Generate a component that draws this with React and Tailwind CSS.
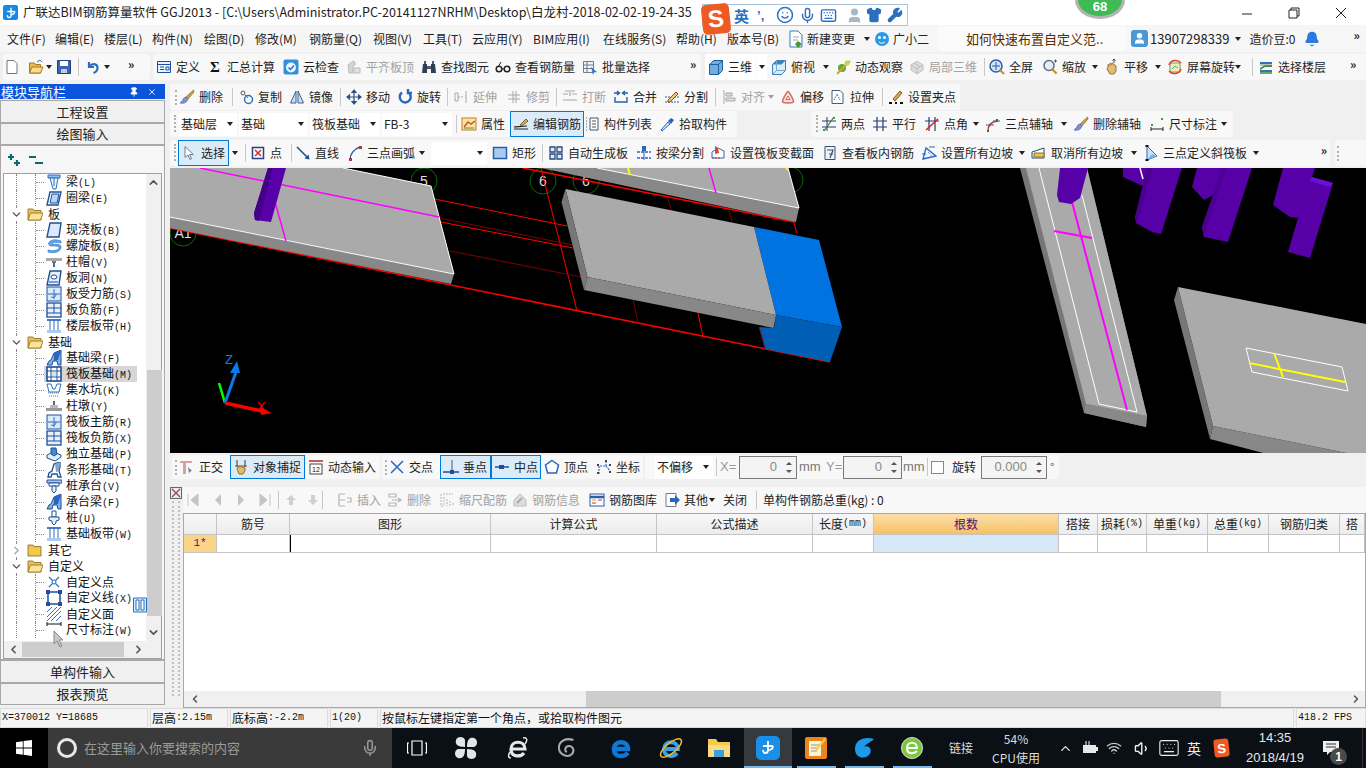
import React from 'react'
import { Mic, Smile, Keyboard, Shirt, Wrench, User, Bell, ChevronUp, ChevronDown, ChevronLeft, ChevronRight, Wifi, Volume1, Pin, X } from 'lucide-react'

const B = '#2a6fc0'
const D = '#1d4f9c'
const G = '#a8a8a8'

const icons = {
  new: <path d="M3 1.500h7l3 3v10H3z" fill="#fff" stroke="#777" />,
  open: <><path d="M1.500 4h5l1 1.500h5V14h-11z" fill="#e9b84e" stroke="#a67a1c" /><path d="M4 8h11l-2.500 6h-11z" fill="#f8dc8c" stroke="#a67a1c" /><path d="M9 3l3-2 2 2" fill="none" stroke={B} /></>,
  save: <><path d="M1.500 1.500h13v13h-13z" fill="#3e62b8" stroke="#223d80" /><path d="M4 2h8v5H4z" fill="#fff" /><path d="M5 10h6v4H5z" fill="#c4cde0" /></>,
  undo: <path d="M4 3v5h5M4.500 7.500C7 4 12 4.500 12.500 8.500c.3 2.500-1.500 4.500-4 5.500" fill="none" stroke={B} strokeWidth="2.200" />,
  def: <><path d="M1.500 2.500h13v11h-13z" fill="#eaf2fb" stroke={D} /><path d="M1.500 5.500h13M4 8h4M4 10.500h4M10 8h3v3h-3z" fill="none" stroke={D} /></>,
  sigma: <text x="8" y="13" fontSize="15" fontWeight="700" textAnchor="middle" fill="#111" fontFamily="Liberation Serif">Σ</text>,
  cloud: <><rect x="0.500" y="0.500" width="15" height="15" rx="2" fill="#2f8fe0" /><circle cx="8" cy="8.500" r="5" fill="#e8f4ff" /><path d="M5.500 8.500l2 2 3.500-4" fill="none" stroke={B} strokeWidth="1.500" /></>,
  flush: <><path d="M2 6l5-4 2 1v3l-2 1v7H3z" fill="#d4d4d4" stroke="#bbb" /><path d="M8 9h6v5H8z" fill="#e2e2e2" stroke="#bbb" /></>,
  find: <><path d="M2 5h4v9H1zM10 5h4l1 9h-5z" fill="#2c3f55" /><path d="M3 2h2v3H3zM11 2h2v3h-2zM6 7h4v3H6z" fill="#557" /></>,
  view: <><circle cx="4" cy="10" r="2.800" fill="none" stroke="#222" strokeWidth="1.500" /><circle cx="12" cy="10" r="2.800" fill="none" stroke="#222" strokeWidth="1.500" /><path d="M3 8l3-5M7 10h2" stroke="#222" /></>,
  batch: <><path d="M1.500 2.500h10v11h-10zM1.500 6h10M1.500 9.500h10M5 2.500v11" fill="#f4f4f4" stroke="#6d7d90" /><path d="M9 8l6 5-3 .5-1 2.500z" fill="#3a78c4" /></>,
  cube: <><path d="M1.500 5.500l4-4h9v10l-4 4h-9z" fill="#6eaee0" stroke="#1f5f99" /><path d="M1.500 5.500h9l4-4M10.500 5.500v10" fill="none" stroke="#1f5f99" /></>,
  top: <><path d="M1.500 5.500l4-4h9v10l-4 4h-9z" fill="#d9ecf9" stroke="#3f7fb5" /><path d="M5.500 1.500h9l-4 4h-9z" fill="#3f85bc" /><path d="M5.500 1.500v10h9M5.500 11.500l-4 4" fill="none" stroke="#7aa8cc" /></>,
  orbit: <><circle cx="7" cy="9" r="4" fill="#5fa83b" /><path d="M2 15l10-10 3-3" stroke="#d9a520" strokeWidth="2" /><circle cx="12" cy="4" r="2.500" fill="#c8d83a" /></>,
  local: <><path d="M2 6l6-4 6 4v5l-6 4-6-4z" fill="#ddd" stroke="#c2c2c2" /><path d="M2 6l6 4 6-4M8 10v5M5 4l6 4" fill="none" stroke="#bbb" /></>,
  zoomall: <><circle cx="7" cy="7" r="6" fill="#cfe2f6" stroke="#2f5fa8" strokeWidth="1.500" /><path d="M7 3v8M3 7h8" stroke="#2f5fa8" /><path d="M11 11l4 4" stroke="#c89020" strokeWidth="2.200" /></>,
  zoom: <><circle cx="7" cy="6.500" r="5" fill="#e8eef5" stroke="#5a6f88" strokeWidth="1.500" /><path d="M10.500 10.500l4 4" stroke="#c89020" strokeWidth="2.200" /><path d="M12 2h3M13.500 .5v3" stroke="#555" /></>,
  pan: <><path d="M4 8V5.500l2 1V4l2 1.500V4l2 1.500 2 1.500v5l-2 3H6L3 10z" fill="#e0bc7a" stroke="#96702e" /><path d="M10 0v4M8.500 1.500L10 0l1.500 1.500" fill="none" stroke="#444" /></>,
  rotate: <><rect x="3" y="4" width="10" height="9" fill="#f5ecb0" stroke="#6ea060" /><path d="M5 10l3-3 3 2" fill="none" stroke="#4aa3d8" /><path d="M2 6a7 7 0 0 1 12-2M14 10a7 7 0 0 1-12 2" fill="none" stroke="#e0402c" strokeWidth="1.500" /></>,
  floors: <><path d="M2 9l5-3h7v2H7l-5 3z" fill="#3a8f3e" /><path d="M2 3h12v2H2zM2 11h12v2H2z" fill="#3671c0" /><path d="M2 6h12" stroke="#888" /><path d="M2 14h12" stroke="#3a8f3e" strokeWidth="1.500" /></>,
  brush: <><path d="M14.500 1L7 8l2 2 6-7z" fill="#c9a23f" stroke="#6f5a1c" strokeWidth=".6" /><path d="M7 8c-2 0-3 2-3.500 3.500L1 14c3 1 7 0 8-4z" fill="#7f8ed8" stroke="#4a5aa8" strokeWidth=".6" /></>,
  copy: <><circle cx="5" cy="4" r="2" fill="none" stroke="#556" /><circle cx="10.500" cy="10.500" r="4" fill="none" stroke={B} strokeWidth="1.500" /><path d="M7 6l3 3" stroke="#556" strokeDasharray="1.500 1" /></>,
  mirror: <path d="M7 2v12H1.500zM9 2v12h5.500z" fill="#cfe0f2" stroke="#3a5f95" />,
  move: <path d="M8 1v14M1 8h14M8 1L6 3.500h4zM8 15l-2-2.500h4zM1 8l2.500-2v4zM15 8l-2.500-2v4z" fill="#2c4f84" stroke="#2c4f84" strokeWidth="1.200" />,
  rot: <path d="M5 3.500a5.500 5.500 0 1 0 6-.3M11 0v4h4" fill="none" stroke="#2a66c0" strokeWidth="2.400" />,
  extend: <><path d="M2 4h3v8H2zM13 2v12" fill="none" stroke={G} strokeWidth="1" /><path d="M5 8h6" stroke={G} strokeDasharray="2 1" /></>,
  trim: <path d="M2 6h12M2 10h12M7 2v12M10 2v12" fill="none" stroke={G} />,
  brk: <path d="M1 5h5M10 5h5M1 11h14M3 2h10M8 3v4" fill="none" stroke={G} strokeWidth="1.200" />,
  merge: <path d="M1 4h5M15 4h-5M4 2l2.500 2L4 6M12 2L9.500 4 12 6M2 8v5h12V8" fill="none" stroke="#2a5ea8" strokeWidth="1.400" />,
  split: <><path d="M1 13h14M1 8h14" stroke="#2a5ea8" strokeDasharray="2 1" /><path d="M4 11l8-8 2 2-8 8H4z" fill="#e9c96a" stroke="#a33" /></>,
  align: <path d="M3 1v14M5 4h6v3H5zM5 9h9v3H5z" fill="#ddd" stroke={G} />,
  offset: <><path d="M8 2.500c1 0 5.500 8 5.500 10s-11 2-11 0 4.500-10 5.500-10z" fill="#f7e0da" stroke="#d0685c" strokeWidth="1.500" /><path d="M8 7l2 3.500H6z" fill="#fff" stroke="#d0685c" /></>,
  stretch: <><path d="M2 1.500h8l3 3v10H2z" fill="#fff" stroke="#4a5a72" /><path d="M4 11l3-6 3 6" fill="none" stroke="#2a66c0" strokeDasharray="1.500 1" /></>,
  grips: <><path d="M5 10L12 2l2 2-7 8z" fill="#d9a84e" stroke="#7a5a1c" /><path d="M1 14h3M7 14h2M12 14h3" stroke="#111" strokeWidth="2" /></>,
  prop: <><rect x="1" y="2" width="14" height="12" fill="#fbe3a8" stroke="#cc7a20" /><path d="M3 11l4-5 3 2 4-3" fill="none" stroke="#c05a20" strokeWidth="1.500" /><path d="M3 12h10" stroke="#5a8f3a" /></>,
  edit: <><path d="M1 11c3 0 8-1 13-1M1 13h14" stroke="#222" strokeWidth="1.200" /><path d="M7 9l6-6 2 2-6 5z" fill="#d9b060" stroke="#7a5a1c" /></>,
  list: <><path d="M6 2h8v12H6z" fill="#fff" stroke="#456" /><path d="M8 5h4M8 8h4M8 11h4" stroke="#456" /><path d="M2 2h2M2 5h2M2 8h2M2 11h2M2 14h2" stroke="#456" strokeDasharray="1 1" /></>,
  pick: <><path d="M2 14l7-8 2 2-8 7z" fill="#cfe4f8" stroke="#2a66c0" /><path d="M9 5l3-3 3 2-3 4z" fill="#2a66c0" /></>,
  two: <><path d="M1 5h14M1 11h14M6 1v14" fill="none" stroke="#2a3a78" /><path d="M3 15L13 1" stroke="#3a7a2a" strokeWidth="1.200" /><path d="M2 13h2v2H2zM12 1h2v2h-2z" fill="#3aa03a" /></>,
  par: <path d="M1 5h14M1 11h14M5 1v14M11 1v14" fill="none" stroke="#2a3a78" strokeWidth="1.200" />,
  ang: <><path d="M1 5h14M5 1v14M11 1v14" fill="none" stroke="#2a3a78" strokeWidth="1.200" /><path d="M2 14L14 3" stroke="#e0201c" strokeWidth="1.600" /></>,
  arcx: <><path d="M3 15c0-6 3-9 9-10" fill="none" stroke="#c82a20" strokeWidth="1.400" /><path d="M1 9h8M8 5h7" stroke="#2a5ea8" /><path d="M3 14v2M12 3v3" stroke="#2a7a3a" strokeWidth="2" /></>,
  dim: <><path d="M2 11v4M14 11v4M2 13h12" fill="none" stroke="#222" /><path d="M2 8h2v2H2zM12 2h2v2h-2z" fill="#3aa03a" /></>,
  cursor: <path d="M4 1.500v11l3-2.500 2 4.500 1.500-.8-2-4.200h3.800z" fill="#fff" stroke="#6d7d90" />,
  point: <><rect x="2.500" y="2.500" width="11" height="11" fill="#fff" stroke="#2a3f80" strokeWidth="1.500" /><path d="M5 5l6 6M11 5l-6 6" stroke="#c8302c" strokeWidth="1.500" /></>,
  line: <><path d="M2 2l11 11" stroke="#1f4f9c" strokeWidth="1.600" /><path d="M14.500 14.500l-1-5-4 4z" fill="#1f4f9c" /></>,
  arc: <><path d="M3 15C3 9 7 4 13 2" fill="none" stroke="#2a5ea8" strokeWidth="1.400" /><path d="M2 13h3v3H2zM12 1h3v3h-3z" fill="#c8302c" /></>,
  rect: <rect x="1.500" y="2.500" width="13" height="11" fill="#a8ccf0" stroke="#2a5ea8" strokeWidth="1.500" />,
  auto: <path d="M2 2h5v5H2zM9 2h5v5H9zM2 9h5v5H2zM9 9h5v5H9z" fill="#dfeafa" stroke="#27497f" strokeWidth="1.300" />,
  sbeam: <><path d="M1 13h14M1 7h14" stroke="#2a66c0" strokeWidth="1.500" strokeDasharray="3 1" /><rect x="6" y="1" width="4" height="5" fill="#2a66c0" /><path d="M8 6v9" stroke="#2a66c0" /></>,
  vsec: <><path d="M2 7l6-4 6 3v7H2z" fill="#fff" stroke="#2a66c0" /><path d="M5 5V1l3 2 1 5-4 1z" fill="#e0402c" /><path d="M2 13h8" stroke="#c8302c" strokeDasharray="2 1" /></>,
  vreb: <><path d="M3 1.500h10v13H3z" fill="#eef3fa" stroke="#38506e" /><path d="M5 5h6l-3 8M7 9h4" fill="none" stroke="#38506e" strokeWidth="1.200" /></>,
  slope: <><path d="M2 14L5 3l10 8-13 3z" fill="#f1f7fd" stroke="#2a66c0" strokeWidth="1.300" /><path d="M1 9h4M8 2h6" stroke="#2a66c0" /><path d="M7 7l4 4" stroke="#2a66c0" strokeDasharray="1 1" /></>,
  unslope: <><path d="M1 7l12-4v10H1z" fill="#fff" stroke="#27497f" /><path d="M3 8h10v4H3z" fill="#e9c84e" stroke="#8a7420" /></>,
  tri: <><path d="M4 1v14l10-4z" fill="#cfe2f6" stroke="#2a66c0" /><path d="M4 15l5-6 5 2" fill="#7fb2e6" /><path d="M2.500 14h3v2h-3zM2.500 0h3v2h-3z" fill="#111" /></>,
  ortho: <><path d="M1 2h12v2H7v11H4V4H1z" fill="#d8a0a0" /><path d="M9 8l4 4-2 .5-1 2z" fill="#6d7d90" /></>,
  osnap: <><path d="M2 7h12" stroke="#8a3a2a" /><path d="M4 1v7M12 1v7" stroke="#555" strokeWidth="1.200" /><path d="M4 10c0-2 3-3 5-2l3 1v3l-2 3H6z" fill="#e0bc6a" stroke="#96702e" /></>,
  dyn: <><path d="M1 2h14" stroke="#c85a5a" strokeWidth="2" /><rect x="2" y="5" width="12" height="10" fill="#fff" stroke="#444" /><text x="8" y="13" fontSize="7" textAnchor="middle" fill="#111" fontFamily="Liberation Sans">12</text></>,
  cross: <path d="M2 2l12 12M14 2L2 14" stroke="#2a66c0" strokeWidth="1.500" />,
  perp: <><path d="M0 13h16" stroke="#1f4f9c" strokeWidth="1.500" /><path d="M9 1v12" stroke="#555" /><rect x="7" y="11" width="4" height="4" fill="#1f4f9c" /></>,
  mid: <><path d="M1 8h14" stroke="#1f4f9c" strokeWidth="1.500" /><rect x="5" y="6" width="5" height="4" fill="#1f4f9c" /></>,
  vtx: <path d="M8 1.500l6.500 4.500-2 8h-9l-2-8z" fill="#fff" stroke="#2a66c0" strokeWidth="1.500" />,
  coord: <><path d="M3 15V7h7M10 7V2M10 7l4 5" fill="none" stroke="#2a66c0" strokeDasharray="2 1" strokeWidth="1.200" /><path d="M1 5h2v2H1zM9 1h2v2H9zM13 5h2v2h-2zM1 13h2v2H1zM13 12h2v2h-2z" fill="#444" /></>,
  first: <path d="M3 2v12M13 2v12L6 8z" fill="#c4c4c4" stroke="#c4c4c4" />,
  prev: <path d="M11 2v12L5 8z" fill="#c4c4c4" />,
  next: <path d="M5 2v12l6-6z" fill="#c4c4c4" />,
  last: <path d="M13 2v12M3 2v12l7-6z" fill="#c4c4c4" stroke="#c4c4c4" />,
  up: <path d="M8 3l5 5h-3v5H6V8H3z" fill="#cfcfcf" />,
  down: <path d="M8 13l5-5h-3V3H6v5H3z" fill="#cfcfcf" />,
  ins: <path d="M2 2h6M2 14h6M2 2v12M2 8h6M10 6h4v4h-4" fill="none" stroke="#b4b4b4" strokeWidth="1.200" />,
  del: <path d="M2 2h7v3H2zM2 11h7v3H2zM5 8h8M11 6l3 2-3 2" fill="none" stroke="#b4b4b4" strokeWidth="1.200" />,
  scale: <path d="M2 2v12h3M5 5v9M8 7v7M11 9v5M14 11v3M4 2h10" fill="none" stroke="#b4b4b4" strokeDasharray="2 1" />,
  info: <><path d="M2 8l6-6 6 6v6H2z" fill="#ddd" stroke="#bbb" /><path d="M5 11l5-5" stroke="#aaa" strokeWidth="2" /></>,
  lib: <><rect x="1" y="2" width="14" height="12" fill="#fff" stroke="#2a5ea8" /><path d="M1 5h14" stroke="#2a5ea8" strokeWidth="2.500" /><path d="M3 8h4" stroke="#c8a020" /><path d="M9 8h4M3 11h4" stroke="#c8302c" /></>,
  other: <><path d="M2 1.500h10v13H2z" fill="#fff" stroke="#6d7d90" /><path d="M6 6h5V3l5 5-5 5v-3H6z" fill="#2a66c0" /></>,
  bm: <><path d="M2 1h12v3H2z" fill="#8ec2ea" stroke={B} /><path d="M4 4h8l-2 11H7z" fill="#e8f3fc" stroke={B} /><path d="M8 4v8" stroke={B} /></>,
  ring: <><path d="M4 2h11l-3 13H1z" fill="#fff" stroke={D} strokeWidth="1.400" /><path d="M6 4h7l-2 9H4z" fill="#b8d6f2" stroke={D} /></>,
  slab: <path d="M4 1h11l-2 14H1z" fill="#dbe9f8" stroke={D} strokeWidth="1.400" />,
  spiral: <path d="M15 3C8 0 1 3 3 7c1 2 8 0 10 2 1 2-4 5-11 3v2c8 2 13-1 13-5C15 5 8 7 6 6c-1-1 3-2 9-1z" fill="#62a8e6" stroke={B} strokeWidth=".6" />,
  capital: <><path d="M0 4h16v3H0z" fill="#aaa" /><path d="M6 7h4v2H6z" fill="#777" /><path d="M7 9h2v4H7z" fill={B} /></>,
  hole: <><path d="M4 1h11l-2 14H1z" fill="#e4eefa" stroke={D} strokeWidth="1.400" /><ellipse cx="8" cy="7" rx="3" ry="2" fill="#fff" stroke={D} /><path d="M3 12h9" stroke={D} /></>,
  bS: <><rect x="1" y="1" width="14" height="14" fill="#dbe9f8" stroke={D} /><path d="M8 3v10M2 8h12" stroke={B} /><path d="M5 11c3 1 5 0 5-3" fill="none" stroke={B} /></>,
  bF: <><rect x="1" y="1" width="14" height="14" fill="#e8f1fb" stroke={D} strokeWidth="1.300" /><path d="M1 6h14M1 11h14M8 1v10" stroke={D} /></>,
  band: <><path d="M1 2h14M1 14h14" stroke={D} strokeWidth="1.500" /><path d="M4 2v12M12 2v12M8 2v12" stroke={B} /><rect x="1" y="12" width="14" height="3" fill="#a8ccf0" /></>,
  fbm: <><path d="M1 15l2-4 2-1 3-7 7-3v15h-3l-1-4H7l-1 4z" fill="#7fb2e6" stroke={D} /><path d="M8 3l7-3-3 10-4 1z" fill="#2a66c0" /></>,
  raft: <><rect x="1" y="1" width="14" height="14" fill="#fff" stroke={D} strokeWidth="1.600" /><path d="M1 5h14M1 11h14M5 1v14M11 1v14" stroke={D} /><rect x="6" y="6" width="4" height="4" fill="#cfe2f6" /></>,
  pit: <><path d="M1 2h4l2 5h2l2-5h4l-2 8H3z" fill="#fff" stroke={B} /><path d="M2 11h12M3 14h10" stroke={B} strokeDasharray="1 1" /></>,
  pier: <><path d="M7 3h2v4H7z" fill="#667" /><path d="M4 7h8v3H4z" fill="#bbb" /><path d="M0 10h16v3H0z" fill="#999" /></>,
  iso: <><path d="M1 9l6-3 8 3v2l-6 4-8-3z" fill="#e2eefa" stroke={D} /><path d="M5 2h5l1 6-3 2-3-2z" fill="#4a86c8" stroke={D} /></>,
  strip: <><path d="M2 15l1-4 3-2 2-7 6-2v5l-1 4 2 6h-3l-1-3H6l-1 3z" fill="#fff" stroke={D} strokeWidth="1.300" /><path d="M9 2l5-2-1 9-3 1z" fill="#7fa6cf" /></>,
  pcap: <><path d="M1 2h15v3H1z" fill="#a8ccf0" stroke={D} /><path d="M3 5h10v3H3z" fill="#fff" stroke={D} /><path d="M6 8h4v5l-2 2-2-2z" fill="#e8f1fb" stroke={D} /></>,
  pile: <><path d="M6 1h4v6H6z" fill="#fff" stroke={D} /><path d="M3 7h10v3l-3 1v2l-2 2-2-2v-2l-3-1z" fill="#e8f1fb" stroke={D} /></>,
  cx: <><path d="M3 3l10 10M13 3L3 13" stroke={B} strokeWidth="1.200" /><circle cx="8" cy="8" r="2" fill="#fff" stroke={B} /></>,
  sq: <><rect x="2" y="2" width="12" height="12" fill="#fff" stroke={D} strokeWidth="1.500" /><path d="M0 0h4v4H0zM12 0h4v4h-4zM0 12h4v4H0zM12 12h4v4h-4z" fill={D} /></>,
  hatch: <path d="M1 6l5-5M1 11L11 1M1 15L15 1M5 15L15 5M10 15l5-5" stroke={B} />,
  dimw: <path d="M1 0v4M15 0v4M1 2h14" fill="none" stroke="#111" />,
}

const Ic = ({ n, className = '' }) => (
  <svg viewBox="0 0 16 16" className={`h-4 w-4 shrink-0 ${className}`}>{icons[n]}</svg>
)

const Caret = ({ dim }) => (
  <span className={`inline-block h-0 w-0 shrink-0 border-x-[3.5px] border-t-4 border-x-transparent ${dim ? 'border-t-[#a0a0a0]' : 'border-t-[#222]'}`} />
)

const Grip = () => <span className="mx-[2px] h-[15px] w-[2px] shrink-0 border-l-2 border-dotted border-[#b0b0b0]" />

const Sep = ({ w = 'w-[11px]' }) => (
  <span className={`flex h-full shrink-0 items-center justify-center ${w}`}>
    <span className="h-[18px] w-px bg-[#c8c8c8]" />
  </span>
)

const More = () => <span className="mb-[7px] shrink-0 text-xs font-bold text-[#222]">»</span>

const Tool = ({ i, t, w, dim, drop, on }) => (
  <div className={`flex h-full shrink-0 items-center whitespace-nowrap ${w} ${dim ? 'text-[#a2a2a2]' : 'text-[#1e1e1e]'} ${on ? 'border border-[#0078d7] bg-[#dcebf8] pl-[2px]' : ''}`}>
    <Ic n={i} />
    <span className="ml-1">{t}</span>
    {drop && <span className="ml-auto mr-[6px] flex"><Caret dim={dim} /></span>}
  </div>
)

const Drop = ({ t, w }) => (
  <div className={`flex h-[23px] shrink-0 items-center justify-between bg-white pl-[2px] pr-[4px] text-[#222] ${w}`}>
    <span>{t}</span>
    <Caret />
  </div>
)

const Spin = ({ w, v }) => (
  <div className={`flex h-[23px] shrink-0 items-center border border-[#7a7a7a] bg-[#f4f4f4] text-[#888] ${w}`}>
    <span className="flex-1 pr-[5px] text-right font-['Liberation_Sans'] text-[13px]">{v}</span>
    <span className="flex w-[14px] flex-col items-center gap-[5px] text-[#555]">
      <span className="h-0 w-0 border-x-[3px] border-b-[3px] border-x-transparent border-b-[#555]" />
      <span className="h-0 w-0 border-x-[3px] border-t-[3px] border-x-transparent border-t-[#555]" />
    </span>
  </div>
)

const Mono = ({ children }) => <span className="font-['Liberation_Mono'] text-[10px]">{children}</span>

const treeRows = [
  ['c', 'bm', '梁', '(L)'], ['c', 'ring', '圈梁', '(E)'], ['f', '', '板'],
  ['c', 'slab', '现浇板', '(B)'], ['c', 'spiral', '螺旋板', '(B)'], ['c', 'capital', '柱帽', '(V)'],
  ['c', 'hole', '板洞', '(N)'], ['c', 'bS', '板受力筋', '(S)'], ['c', 'bF', '板负筋', '(F)'],
  ['c', 'band', '楼层板带', '(H)'], ['f', '', '基础'], ['c', 'fbm', '基础梁', '(F)'],
  ['s', 'raft', '筏板基础', '(M)'], ['c', 'pit', '集水坑', '(K)'], ['c', 'pier', '柱墩', '(Y)'],
  ['c', 'bS', '筏板主筋', '(R)'], ['c', 'bF', '筏板负筋', '(X)'], ['c', 'iso', '独立基础', '(P)'],
  ['c', 'strip', '条形基础', '(T)'], ['c', 'pcap', '桩承台', '(V)'], ['c', 'fbm', '承台梁', '(F)'],
  ['c', 'pile', '桩', '(U)'], ['c', 'band', '基础板带', '(W)'], ['z', '', '其它'], ['f', '', '自定义'],
  ['c', 'cx', '自定义点'], ['c', 'sq', '自定义线', '(X)'], ['c', 'hatch', '自定义面'], ['c', 'dimw', '尺寸标注', '(W)'],
]

const Folder = ({ open }) => (
  <svg viewBox="0 0 16 14" className="h-[14px] w-4 shrink-0">
    <path d="M1 2h5l1 1.500h7V13H1z" fill="#e8c25c" stroke="#8a6a20" strokeWidth=".8" />
    {open ? <path d="M3.500 6H16l-2.500 7H1z" fill="#fbe39a" stroke="#8a6a20" strokeWidth=".8" /> : <path d="M2 5h11v7H2z" fill="#f4c94a" />}
  </svg>
)

const TreeRow = ({ row }) => {
  const [kind, icon, name, key] = row
  const isChild = kind === 'c' || kind === 's'
  return (
    <div className="relative flex h-4 items-center whitespace-nowrap leading-4 text-[#111]">
      <span className="absolute inset-y-0 left-[12px] border-l border-dotted border-[#888]" />
      {isChild && <span className="absolute inset-y-0 left-[31px] border-l border-dotted border-[#888]" />}
      {isChild ? (
        <>
          <span className="ml-[32px] w-[8px] border-t border-dotted border-[#888]" />
          <span className={`relative flex h-full w-[93px] shrink-0 items-center pl-[2px] ${kind === 's' ? 'bg-[#d6d6d6]' : ''}`}>
            <Ic n={icon} />
            <span className="ml-1">{name}{key && <Mono>{key}</Mono>}</span>
          </span>
        </>
      ) : (
        <>
          <span className="relative ml-[5px] flex w-[15px] justify-center bg-white">
            {kind === 'z' ? <ChevronRight size={13} color="#aaa" strokeWidth={2.5} /> : <ChevronDown size={13} color="#555" strokeWidth={2.5} />}
          </span>
          <span className="ml-[3px]"><Folder open={kind === 'f'} /></span>
          <span className="ml-[5px]">{name}</span>
        </>
      )}
    </div>
  )
}

const PanelBtn = ({ t, h }) => (
  <div className={`flex shrink-0 items-center justify-center border border-[#a8a8a8] bg-[#f0f0f0] text-[13px] text-[#222] ${h}`}>{t}</div>
)

const LeftPanel = () => (
  <div className="flex w-[165px] shrink-0 flex-col">
    <div className="flex h-[15px] shrink-0 items-center justify-between bg-[#0a55dc] pl-px pr-[8px] text-[13px] leading-none text-white">
      <span>模块导航栏</span>
      <span className="flex items-center gap-[8px]"><Pin size={10} fill="#fff" /><X size={10} /></span>
    </div>
    <div className="mt-px flex flex-col">
      <PanelBtn t="工程设置" h="h-[23px]" />
      <PanelBtn t="绘图输入" h="h-[22px]" />
    </div>
    <div className="flex h-[515px] shrink-0 flex-col border border-[#a8a8a8] bg-[#f6f6f6] px-[2px]">
      <div className="flex h-[27px] shrink-0 items-center gap-[6px] pl-[3px]">
        <svg viewBox="0 0 16 16" className="h-4 w-4"><path d="M2 5h6M5 2v6M8 11h6M11 8v6" stroke="#0a6a6a" strokeWidth="2.200" /></svg>
        <svg viewBox="0 0 16 16" className="h-4 w-4"><path d="M1 5h7M7 11h8" stroke="#0a6a6a" strokeWidth="2.200" /></svg>
      </div>
      <div className="relative flex min-h-0 flex-1 flex-col border border-[#a0a0a0] bg-white">
        <div className="flex min-h-0 flex-1">
          <div className="min-w-0 flex-1 overflow-hidden">
            {treeRows.map((r, idx) => <TreeRow key={idx} row={r} />)}
          </div>
          <div className="flex w-[15px] shrink-0 flex-col items-center justify-between bg-[#f0f0f0] py-[2px]">
            <ChevronUp size={13} color="#555" strokeWidth={3} />
            <ChevronDown size={13} color="#555" strokeWidth={3} />
          </div>
        </div>
        <div className="flex h-[17px] shrink-0 items-center bg-[#f0f0f0]">
          <span className="flex w-[18px] justify-center"><ChevronLeft size={13} color="#555" strokeWidth={3} /></span>
          <span className="h-[15px] w-[102px] bg-[#cdcdcd]" />
          <span className="ml-[5px] flex w-[18px] justify-center"><ChevronRight size={13} color="#555" strokeWidth={3} /></span>
        </div>
        {/* vertical thumb, lies over the scrollbar track */}
        <span className="absolute left-[143px] top-[196px] h-[246px] w-[15px] bg-[#cdcdcd]" />
        <svg viewBox="0 0 14 16" className="absolute left-[129px] top-[423px] h-4 w-[14px]"><path d="M.5 1h13v14H.5z" fill="#dcebfa" stroke="#2a6fc0" /><path d="M3 3h3v10H3zM8 3h3v10H8z" fill="#fff" stroke="#2a6fc0" /></svg>
        <svg viewBox="0 0 14 18" className="absolute left-[48px] top-[456px] h-[18px] w-[14px]"><path d="M2 1v13l3-3 3 6 2-1-3-6h4z" fill="#c9c9c9" stroke="#8a8a8a" /></svg>
      </div>
    </div>
    <PanelBtn t="单构件输入" h="h-[23px]" />
    <PanelBtn t="报表预览" h="h-[22px]" />
  </div>
)

const Scene = () => (
  <svg viewBox="170 168 1196 285" className="h-[285px] w-[1196px] bg-black">
    {[[424, 181, '5'], [543, 181, '6'], [586, 181, '6'], [183, 233, 'A1'], [790, 180, '']].map(([cx, cy, t], i) => (
      <g key={i}>
        <circle cx={cx} cy={cy} r="13" fill="none" stroke="#0a6a0a" />
        <text x={cx} y={cy + 5} fontSize="14" textAnchor="middle" fill="#ddd" fontFamily="Liberation Sans">{t}</text>
      </g>
    ))}
    <g stroke="#f00" fill="none">
      <path d="M434.500 199L567 226M441 222L573 248M541 168L577 311M698 313L703 337M794 222L796.500 233" />
      <path d="M170 228L830 362" strokeWidth="1.500" />
      <path d="M523 168L794 222" strokeWidth="1.500" />
    </g>
    <path d="M439 218L573 245M450 251L581 277M633 300L638 323M668 198L671 210M729 210L732 222" stroke="#800000" fill="none" />

    <path d="M170 168H343L431 186L454 274L170 217z" fill="#aaa" />
    <path d="M170 217L454 274L451 284L170 228z" fill="#888" />
    <path d="M343 168L431 186L454 274L170 217" fill="none" stroke="#fff" />
    <path d="M200 168L439 217M275 202L286 241" stroke="#f0f" strokeWidth="1.500" fill="none" />
    <path d="M268 168H286L271 222L255 220L254 213z" fill="#5800a8" />
    <path d="M268 168H273L259 221L255 220L254 213z" fill="#450088" />

    <path d="M597 168H788L799 208z" fill="#aaa" />
    <path d="M541 168H597L799 208L796 222z" fill="#888" />
    <path d="M597 168L799 208L788 168" fill="none" stroke="#fff" />
    <path d="M709 168L716 193" stroke="#f0f" strokeWidth="1.500" />
    <path d="M628 168L630 175M786 168L788 170" stroke="#ff0" strokeWidth="2" />

    <path d="M754 227L819 240L842 327L776 315z" fill="#0073e0" />
    <path d="M776 315L842 327L830 362L765 349L759 327L774 328z" fill="#005fb4" />
    <path d="M759 327L765 349" stroke="#700" />
    <path d="M565.500 189L754 227L776 315L587.500 277z" fill="#aaa" />
    <path d="M565.500 189L561.500 202L584 290L587.500 277z" fill="#777" />
    <path d="M587.500 277L776 315L773.500 328L584 290z" fill="#888" />

    <g fontFamily="Liberation Sans" fontSize="13">
      <text x="225" y="364" fill="#1080f0">Z</text>
      <text x="257" y="411" fill="#f00">X</text>
    </g>
    <path d="M225 403L219 383" stroke="#0f0" strokeWidth="2.500" />
    <path d="M225 403L236 372" stroke="#0a7ae8" strokeWidth="3" />
    <path d="M237 361L230 373H240z" fill="#0a7ae8" />
    <path d="M225 403L262 411" stroke="#f00" strokeWidth="3.500" />
    <path d="M272 413L260 407L261 415z" fill="#f00" />

    <path d="M1020 168H1087L1147 416L1146 427L1084 413z" fill="#777" />
    <path d="M1026 168H1087L1147 416L1086 404z" fill="#aaa" />
    <path d="M1086 404L1147 416L1146 427L1084 413z" fill="#888" />
    <path d="M1039 168L1099 404L1137 412L1082 195" fill="none" stroke="#fff" />
    <path d="M1072 202L1127 410M1054 231L1092 238M1062 168L1064 178" stroke="#f0f" strokeWidth="2" fill="none" />

    <path d="M1060 168H1088L1080 198L1071 204L1059 202L1057 195z" fill="#5800a8" />
    <path d="M1123 168H1182L1161 234L1152 232L1136 223L1135 217L1145 187L1123 177z" fill="#5800a8" />
    <path d="M1147 168H1153L1137 223L1135 217z" fill="#4a0090" />
    <path d="M1197 168H1252L1228 242L1204 237L1202 227L1213 195L1204 200L1192 187z" fill="#5800a8" />
    <path d="M1222 168H1226L1204 237L1202 227z" fill="#4a0090" />
    <path d="M1283 168H1315L1312 177L1333 183L1310 258L1288 252L1298 218L1290 217L1273 205z" fill="#5800a8" />
    <path d="M1312 177L1333 183L1330 187L1310 181z" fill="#6a10d8" />
    <path d="M1140 168L1143 179" stroke="#fff" strokeWidth="1.500" />

    <path d="M1178 287L1174 300L1210 439L1213 426z" fill="#777" />
    <path d="M1213 426L1366 457V480L1210 439z" fill="#888" />
    <path d="M1178 287L1366 324V457L1213 426z" fill="#aaa" />
    <path d="M1246 348L1342 367L1348 391L1252 372z" fill="none" stroke="#fff" />
    <path d="M1249 363L1345 382M1274 353L1283 377" stroke="#ff0" strokeWidth="2" />
  </svg>
)

const cols = [
  ['筋号', 'w-[73px]'], ['图形', 'w-[201px]'], ['计算公式', 'w-[166px]'], ['公式描述', 'w-[156px]'],
  ['长度', 'w-[61px]', '(mm)'], ['根数', 'w-[185px]'], ['搭接', 'w-[39px]'], ['损耗', 'w-[49px]', '(%)'],
  ['单重', 'w-[61px]', '(kg)'], ['总重', 'w-[61px]', '(kg)'], ['钢筋归类', 'w-[71px]'], ['搭', 'flex-1'],
]

const GridTable = () => (
  <div className="flex min-h-0 flex-1 flex-col border border-[#a8a8a8] bg-white">
    <div className="flex h-[20px] shrink-0 bg-gradient-to-b from-[#f8f8f8] to-[#ececec]">
      <div className="w-[33px] shrink-0 border-r border-[#c4c4c4]" />
      {cols.map(([t, w, u], i) => (
        <div key={i} className={`flex shrink-0 items-center justify-center overflow-hidden border-r border-[#c4c4c4] ${w} ${i === 5 ? 'bg-gradient-to-b from-[#fbdfa8] to-[#f5c263] text-[#5a0a80]' : 'text-[#222]'}`}>
          {t}{u && <Mono>{u}</Mono>}
        </div>
      ))}
    </div>
    <div className="flex h-[19px] shrink-0 border-y border-[#c4c4c4]">
      <div className="flex w-[33px] shrink-0 items-center justify-center border-r border-[#c4c4c4] bg-[#fdd38a] font-['Liberation_Mono'] text-[11px] text-[#4a0a80]">1*</div>
      {cols.map(([t, w], i) => (
        <div key={i} className={`shrink-0 border-r border-[#c4c4c4] ${w} ${i === 1 ? 'border-l border-l-black' : ''} ${i === 5 ? 'bg-[#d6e8f7]' : ''}`} />
      ))}
    </div>
    <div className="flex-1" />
    <div className="flex h-[16px] shrink-0 items-center bg-[#f0f0f0]">
      <span className="ml-[4px] flex w-[14px] justify-center"><ChevronLeft size={12} color="#555" strokeWidth={3} /></span>
      <span className="ml-[384px] h-full w-[635px] bg-[#cdcdcd]" />
      <span className="ml-auto mr-[2px] flex w-[14px] justify-center"><ChevronRight size={12} color="#555" strokeWidth={3} /></span>
    </div>
  </div>
)

const GridTool = ({ i, w }) => (
  <span className={`flex h-full shrink-0 items-center ${w}`}><Ic n={i} /></span>
)

const EditorArea = () => (
  <div className="flex min-w-0 flex-1 flex-col text-xs">
    <div className="flex h-[26px] w-[790px] shrink-0 items-center rounded-[3px] bg-[#f8f8f8] pl-[3px]">
      <Grip />
      <Tool i="brush" t="删除" w="w-[48px]" />
      <Sep />
      <Tool i="copy" t="复制" w="w-[51px]" />
      <Tool i="mirror" t="镜像" w="w-[46px]" />
      <Sep />
      <Tool i="move" t="移动" w="w-[51px]" />
      <Tool i="rot" t="旋转" w="w-[45px]" />
      <Sep />
      <Tool i="extend" t="延伸" w="w-[53px]" dim />
      <Tool i="trim" t="修剪" w="w-[45px]" dim />
      <Sep />
      <Tool i="brk" t="打断" w="w-[51px]" dim />
      <Tool i="merge" t="合并" w="w-[51px]" />
      <Tool i="split" t="分割" w="w-[46px]" />
      <Sep />
      <Tool i="align" t="对齐" w="w-[59px]" dim drop />
      <Tool i="offset" t="偏移" w="w-[50px]" />
      <Tool i="stretch" t="拉伸" w="w-[47px]" />
      <Sep />
      <Tool i="grips" t="设置夹点" w="w-[72px]" />
    </div>

    <div className="mt-px flex h-[26px] shrink-0 items-center">
      <div className="flex h-full w-[567px] shrink-0 items-center rounded-[3px] bg-[#f8f8f8] pl-[2px]">
        <span className="w-[7px] shrink-0"><Grip /></span>
        <Drop t="基础层" w="w-[58px]" />
        <Drop t="基础" w="ml-[2px] w-[69px]" />
        <Drop t="筏板基础" w="ml-[2px] w-[70px]" />
        <Drop t="FB-3" w="ml-[2px] w-[70px]" />
        <Sep w="w-[9px]" />
        <Tool i="prop" t="属性" w="w-[49px]" />
        <Tool i="edit" t="编辑钢筋" w="h-[23px] w-[74px]" on />
        <Tool i="list" t="构件列表" w="w-[75px]" />
        <Tool i="pick" t="拾取构件" w="w-[73px]" />
      </div>
      <div className="ml-[74px] flex h-full w-[422px] shrink-0 items-center rounded-[3px] bg-[#f8f8f8] pl-[3px]">
        <span className="w-[7px] shrink-0"><Grip /></span>
        <Tool i="two" t="两点" w="w-[51px]" />
        <Tool i="par" t="平行" w="w-[52px]" />
        <Tool i="ang" t="点角" w="w-[61px]" drop />
        <Tool i="arcx" t="三点辅轴" w="w-[88px]" drop />
        <Tool i="brush" t="删除辅轴" w="w-[76px]" />
        <Tool i="dim" t="尺寸标注" w="w-[84px]" drop />
      </div>
    </div>

    <div className="mt-[3px] flex h-[26px] shrink-0 items-center">
      <div className="flex h-full w-[1160px] shrink-0 items-center rounded-[3px] bg-[#f8f8f8] pl-[2px]">
        <span className="w-[6px] shrink-0"><Grip /></span>
        <Tool i="cursor" t="选择" w="h-[23px] w-[51px]" on />
        <span className="flex w-[12px] shrink-0 justify-center"><Caret /></span>
        <Sep w="w-[9px]" />
        <Tool i="point" t="点" w="w-[37px]" />
        <Sep w="w-[8px]" />
        <Tool i="line" t="直线" w="w-[52px]" />
        <Tool i="arc" t="三点画弧" w="w-[84px]" drop />
        <Drop t="" w="w-[56px]" />
        <Tool i="rect" t="矩形" w="ml-[5px] w-[45px]" />
        <Sep w="w-[11px]" />
        <Tool i="auto" t="自动生成板" w="w-[88px]" />
        <Tool i="sbeam" t="按梁分割" w="w-[74px]" />
        <Tool i="vsec" t="设置筏板变截面" w="w-[112px]" />
        <Tool i="vreb" t="查看板内钢筋" w="w-[99px]" />
        <Tool i="slope" t="设置所有边坡" w="w-[110px]" drop />
        <Tool i="unslope" t="取消所有边坡" w="w-[112px]" drop />
        <Tool i="tri" t="三点定义斜筏板" w="w-[122px]" drop />
        <span className="ml-auto mr-[3px] flex"><More /></span>
      </div>
      <div className="ml-[5px] flex h-full flex-1 items-center rounded-l-[3px] bg-[#f8f8f8]"><Grip /></div>
    </div>

    <div className="mt-[2px] shrink-0"><Scene /></div>

    <div className="mt-[2px] flex h-[24px] shrink-0 items-center">
      <div className="ml-[2px] flex h-full w-[208px] shrink-0 items-center rounded-[3px] bg-[#f8f8f8] pl-px">
        <Grip />
        <Tool i="ortho" t="正交" w="w-[51px]" />
        <Tool i="osnap" t="对象捕捉" w="h-[23px] w-[75px]" on />
        <Tool i="dyn" t="动态输入" w="ml-[3px] w-[73px]" />
      </div>
      <div className="ml-[2px] flex h-full w-[261px] shrink-0 items-center rounded-[3px] bg-[#f8f8f8] pl-px">
        <Grip />
        <Tool i="cross" t="交点" w="w-[51px]" />
        <Tool i="perp" t="垂点" w="h-[23px] w-[51px]" on />
        <Tool i="mid" t="中点" w="h-[23px] w-[50px]" on />
        <Tool i="vtx" t="顶点" w="ml-[3px] w-[52px]" />
        <Tool i="coord" t="坐标" w="w-[47px]" />
      </div>
      <div className="ml-[2px] flex h-full w-[414px] shrink-0 items-center rounded-[3px] bg-[#f8f8f8] pl-[10px]">
        <Drop t="不偏移" w="w-[58px]" />
        <Sep w="w-[7px]" />
        <span className="w-[16px] shrink-0 font-['Liberation_Sans'] text-[13px] text-[#999]">X=</span>
        <Spin w="ml-[3px] w-[58px]" v="0" />
        <span className="ml-[2px] w-[27px] shrink-0 font-['Liberation_Sans'] text-[13px] text-[#777]">mm</span>
        <span className="w-[17px] shrink-0 font-['Liberation_Sans'] text-[13px] text-[#999]">Y=</span>
        <Spin w="w-[59px]" v="0" />
        <span className="ml-px w-[24px] shrink-0 font-['Liberation_Sans'] text-[13px] text-[#777]">mm</span>
        <span className="h-[18px] w-px shrink-0 bg-[#c8c8c8]" />
        <span className="ml-[3px] h-[13px] w-[13px] shrink-0 border border-[#888] bg-white" />
        <span className="ml-[8px] w-[29px] shrink-0 text-[#222]">旋转</span>
        <Spin w="w-[66px]" v="0.000" />
        <span className="ml-[3px] text-[#555]">°</span>
      </div>
    </div>

    <div className="flex min-h-0 flex-1">
      <div className="flex w-[13px] shrink-0 flex-col pt-[8px]">
        <svg viewBox="0 0 12 12" className="h-3 w-3"><rect x=".5" y=".5" width="11" height="11" fill="#e8e8ee" stroke="#666" /><path d="M2 2l8 8M10 2l-8 8" stroke="#8a4a5a" strokeWidth="1.200" /></svg>
        <span className="ml-[2px] mt-[2px] h-[195px] w-[8px] border-x-2 border-dotted border-[#c0c0c0]" />
      </div>
      <div className="flex min-w-0 flex-1 flex-col">
        <div className="mt-[8px] flex h-[26px] shrink-0 items-center bg-[#f8f8f8] pl-[2px]">
          <GridTool i="first" w="w-[25px]" />
          <GridTool i="prev" w="w-[23px]" />
          <GridTool i="next" w="w-[24px]" />
          <GridTool i="last" w="w-[17px]" />
          <Sep w="w-[9px]" />
          <GridTool i="up" w="w-[22px]" />
          <GridTool i="down" w="w-[13px]" />
          <Sep w="w-[9px]" />
          <Tool i="ins" t="插入" w="ml-[10px] w-[50px]" dim />
          <Tool i="del" t="删除" w="w-[52px]" dim />
          <Tool i="scale" t="缩尺配筋" w="w-[73px]" dim />
          <Tool i="info" t="钢筋信息" w="w-[77px]" dim />
          <Tool i="lib" t="钢筋图库" w="w-[75px]" />
          <Tool i="other" t="其他" w="w-[53px]" />
          <span className="-ml-[8px] mr-[8px] flex"><Caret /></span>
          <span className="w-[28px] shrink-0 text-[#1e1e1e]">关闭</span>
          <Sep w="w-[11px]" />
          <span className="ml-[1px] whitespace-nowrap text-[#1e1e1e]">单构件钢筋总重(kg) : 0</span>
        </div>
        <GridTable />
      </div>
    </div>
  </div>
)

const StatusCell = ({ w, children }) => (
  <div className={`flex h-[20px] items-center overflow-hidden whitespace-nowrap border border-[#dcdcdc] bg-[#f4f4f4] pl-[1px] text-xs text-[#111] ${w}`}>{children}</div>
)

const StatusBar = () => (
  <div className="flex h-[20px] shrink-0 gap-[2px]">
    <StatusCell w="w-[148px]"><Mono>X=370012 Y=18685</Mono></StatusCell>
    <StatusCell w="w-[78px]">层高<Mono>:2.15m</Mono></StatusCell>
    <StatusCell w="w-[98px]">底标高<Mono>:-2.2m</Mono></StatusCell>
    <StatusCell w="w-[48px]"><Mono>1(20)</Mono></StatusCell>
    <StatusCell w="w-[914px]">按鼠标左键指定第一个角点，或拾取构件图元</StatusCell>
    <StatusCell w="w-[70px]"><Mono>418.2 FPS</Mono></StatusCell>
  </div>
)

const menu = [
  ['文件(F)', 'w-[48px]'], ['编辑(E)', 'w-[49px]'], ['楼层(L)', 'w-[48px]'], ['构件(N)', 'w-[52px]'], ['绘图(D)', 'w-[51px]'],
  ['修改(M)', 'w-[54px]'], ['钢筋量(Q)', 'w-[64px]'], ['视图(V)', 'w-[50px]'], ['工具(T)', 'w-[49px]'], ['云应用(Y)', 'w-[61px]'],
  ['BIM应用(I)', 'w-[70px]'], ['在线服务(S)', 'w-[73px]'], ['帮助(H)', 'w-[51px]'], ['版本号(B)', 'w-[53px]'],
]

const MenuBar = () => (
  <div className="flex h-[27px] shrink-0 items-center bg-[#f6f6f6] pl-[7px] text-xs text-[#222]">
    {menu.map(([t, w]) => <span key={t} className={`shrink-0 whitespace-nowrap ${w}`}>{t}</span>)}
    <svg viewBox="0 0 16 18" className="ml-[8px] h-[18px] w-4 shrink-0"><path d="M2 1h8l4 4v12H2z" fill="#fff" stroke="#3a78c4" /><path d="M5 7h6M5 10h5" stroke="#9ab" /><path d="M10 11l4 3-4 4-3-4z" fill="#4a9a2a" /></svg>
    <span className="ml-[3px] shrink-0">新建变更</span>
    <span className="ml-[9px] flex"><Caret /></span>
    <svg viewBox="0 0 16 16" className="ml-[4px] h-4 w-4 shrink-0"><circle cx="8" cy="8" r="7" fill="#2a9ae8" /><circle cx="5.500" cy="6.500" r="1.500" fill="#fff" /><circle cx="10.500" cy="6.500" r="1.500" fill="#fff" /><path d="M5 11c2 1.500 4 1.500 6 0" stroke="#fff" fill="none" /></svg>
    <span className="ml-[3px] shrink-0">广小二</span>
    <div className="ml-[9px] flex h-[25px] w-[188px] shrink-0 items-center rounded-[3px] bg-[#fbfbfb] pl-[28px] text-[13px] text-[#5a2a00]">如何快速布置自定义范..</div>
    <span className="ml-[5px] flex h-[17px] w-[17px] shrink-0 items-center justify-center rounded-[3px] bg-[#4a98d8]"><User size={13} color="#fff" fill="#fff" /></span>
    <span className="ml-[2px] shrink-0 text-[13px]">13907298339</span>
    <span className="ml-[6px] flex"><Caret /></span>
    <span className="ml-[8px] shrink-0">造价豆:0</span>
    <span className="ml-[9px] flex"><Bell size={16} color="#2a7ae0" fill="#2a7ae0" /></span>
    <span className="ml-[33px] flex"><More /></span>
  </div>
)

const TopToolbar = () => (
  <div className="mt-[2px] flex h-[26px] shrink-0 items-center text-xs">
    <div className="ml-[3px] flex h-full w-[147px] shrink-0 items-center rounded-[3px] bg-[#f8f8f8] pl-px">
      <Ic n="new" />
      <Ic n="open" className="ml-[8px]" />
      <span className="ml-[2px] flex"><Caret /></span>
      <Ic n="save" className="ml-[4px]" />
      <Sep w="w-[13px]" />
      <Ic n="undo" />
      <span className="ml-[3px] flex"><Caret /></span>
      <span className="ml-[18px] flex"><More /></span>
    </div>
    <div className="ml-[3px] flex h-full w-[548px] shrink-0 items-center rounded-[3px] bg-[#f8f8f8] pl-[3px]">
      <Tool i="def" t="定义" w="w-[51px]" />
      <Tool i="sigma" t="汇总计算" w="w-[76px]" />
      <Tool i="cloud" t="云检查" w="w-[63px]" />
      <Tool i="flush" t="平齐板顶" w="w-[75px]" dim />
      <Tool i="find" t="查找图元" w="w-[74px]" />
      <Tool i="view" t="查看钢筋量" w="w-[87px]" />
      <Tool i="batch" t="批量选择" w="w-[108px]" />
      <More />
    </div>
    <div className="ml-[4px] flex h-full min-w-0 flex-1 items-center bg-[#f8f8f8]">
      <Tool i="cube" t="三维" w="w-[50px] bg-white pl-[3px]" />
      <span className="ml-px flex h-full w-[11px] shrink-0 items-center justify-center bg-white"><Caret /></span>
      <span className="w-[4px] shrink-0" />
      <Tool i="top" t="俯视" w="w-[64px]" drop />
      <Tool i="orbit" t="动态观察" w="w-[74px]" />
      <Tool i="local" t="局部三维" w="w-[70px]" dim />
      <Sep w="w-[10px]" />
      <Tool i="zoomall" t="全屏" w="w-[53px]" />
      <Tool i="zoom" t="缩放" w="w-[62px]" drop />
      <Tool i="pan" t="平移" w="w-[63px]" drop />
      <Tool i="rotate" t="屏幕旋转" w="w-[79px]" drop />
      <Sep w="w-[12px]" />
      <Tool i="floors" t="选择楼层" w="w-[92px]" />
      <More />
    </div>
  </div>
)

const TitleBar = () => (
  <div className="flex h-[25px] shrink-0 items-center bg-white text-[#222]">
    <span className="ml-[3px] flex h-[15px] w-[15px] items-center justify-center rounded-[2px] bg-[#1689e6]">
      <svg viewBox="0 0 16 16" className="h-3 w-3"><path d="M8 1v10c0 4-5 4-5 0M3 6h10M13 6c0 3-2 4-5 4" fill="none" stroke="#fff" strokeWidth="1.800" /></svg>
    </span>
    <span className="ml-[5px] whitespace-nowrap text-[12.5px]">广联达BIM钢筋算量软件 GGJ2013 - [C:\Users\Administrator.PC-20141127NRHM\Desktop\白龙村-2018-02-02-19-24-35</span>
    <span className="ml-auto flex items-center text-[#222]">
      <svg viewBox="0 0 120 12" className="mr-[4px] h-3 w-[120px]"><path d="M0 7h10" stroke="#222" /><path d="M47 3h8v8h-8zM49 3V1h8v8h-2" fill="none" stroke="#222" /><path d="M94 1l10 10M104 1L94 11" stroke="#222" /></svg>
    </span>
  </div>
)

const SogouBar = () => (
  <div className="absolute left-[702px] top-[4px] flex h-[22px] w-[206px] items-center border border-[#a8c4de] bg-white">
    <span className="absolute -left-[1px] -top-[1px] flex h-[30px] w-[28px] -rotate-6 items-center justify-center rounded-[5px] bg-[#ef5a22] font-['Liberation_Sans'] text-[24px] font-bold leading-none text-white">S</span>
    <span className="ml-[31px] text-[15px] font-bold leading-none text-[#2a6fc0]">英</span>
    <span className="ml-[8px] w-[7px] font-['Liberation_Sans'] text-[13px] font-bold leading-none text-[#2a6fc0]">’,</span>
    <Smile className="ml-[12px]" size={18} color="#2a6fc0" />
    <Mic className="ml-[5px]" size={17} color="#2a6fc0" />
    <Keyboard className="ml-[4px]" size={17} color="#2a6fc0" />
    <User className="ml-[9px]" size={17} color="#a8b8c8" fill="#a8b8c8" />
    <Shirt className="ml-[3px]" size={16} color="#2a6fc0" fill="#2a6fc0" />
    <Wrench className="ml-[5px]" size={16} color="#2a6fc0" fill="#2a6fc0" />
  </div>
)

const Taskbar = () => (
  <div className="flex h-10 shrink-0 items-stretch bg-[#0a1016] text-white">
    <div className="flex w-12 shrink-0 items-center justify-center bg-black">
      <svg viewBox="0 0 16 16" className="h-4 w-4"><path d="M0 2.200l6.800-1v6.400H0zM7.600 1l8.400-1v7.600H7.600zM0 8.400h6.800v6.400L0 13.800zM7.600 8.400H16V16l-8.400-1.200z" fill="#fff" /></svg>
    </div>
    <div className="flex w-[344px] shrink-0 items-center bg-[#3a3a3a] pl-[9px] text-[13px] text-[#9a9a9a]">
      <span className="h-[20px] w-[20px] shrink-0 rounded-full border-[3px] border-[#e8e8e8]" />
      <span className="ml-[7px] w-[277px] shrink-0">在这里输入你要搜索的内容</span>
      <Mic size={18} color="#999" />
    </div>
    <div className="relative flex flex-1 items-center">
      <span className="ml-[15px] flex w-[46px]">
        <svg viewBox="0 0 20 16" className="h-4 w-5"><path d="M5 1h10v14H5zM2 3H.5v10H2M18 3h1.500v10H18" fill="none" stroke="#fff" strokeWidth="1.200" /></svg>
      </span>
      <svg viewBox="0 0 24 24" className="ml-[1px] h-6 w-6 shrink-0"><path d="M11 11C3 11 1 8 2 4s8-4 9 0zM13 11c0-8 3-10 7-9s4 8 0 9zM13 13c8 0 10 3 9 7s-8 4-9 0zM11 13c0 8-3 10-7 9s-4-8 0-9z" fill="#dfe6ea" /></svg>
      <svg viewBox="0 0 24 24" className="ml-[28px] h-6 w-6 shrink-0"><path d="M5 13h14c0-9-14-9-14 0s10 8 13 4" fill="none" stroke="#e8e8e8" strokeWidth="3.200" /><path d="M17 2c4-1 5 2 2 6M5 22c-3 0-3-3-1-6" fill="none" stroke="#e8e8e8" strokeWidth="1.500" /></svg>
      <svg viewBox="0 0 24 24" className="ml-[25px] h-6 w-6 shrink-0"><path d="M18 4C9 1 3 7 4 13c1 6 9 9 13 5 3-3 1-8-3-8s-5 5-2 6" fill="none" stroke="#aaa" strokeWidth="2" /><path d="M7 5c3-3 8-3 12-1" fill="none" stroke="#aaa" /></svg>
      <svg viewBox="0 0 24 24" className="ml-[30px] h-6 w-6 shrink-0"><path d="M5 13h14c0-9-14-9-14 0s10 8 14 4" fill="none" stroke="#0f78d4" strokeWidth="4.500" /></svg>
      <svg viewBox="0 0 24 24" className="ml-[26px] h-6 w-6 shrink-0"><path d="M5 13h14c0-9-14-9-14 0s10 8 13 4" fill="none" stroke="#3aa0e8" strokeWidth="3.800" /><ellipse cx="12" cy="12" rx="13" ry="5" fill="none" stroke="#f0c020" strokeWidth="1.500" transform="rotate(-40 12 12)" /></svg>
      <svg viewBox="0 0 24 24" className="ml-[24px] h-6 w-6 shrink-0"><path d="M1 3h8l2 3h12v15H1z" fill="#f5c84e" /><path d="M1 9h22v12H1z" fill="#fbdc84" /><path d="M7 14h10v7H7z" fill="#3aa0d8" /></svg>
      <div className="ml-[13px] flex h-full w-12 shrink-0 items-center justify-center bg-[#36393d]">
        <span className="flex h-[24px] w-[24px] items-center justify-center rounded-[5px] bg-[#1a8fe8]">
          <svg viewBox="0 0 16 16" className="h-4 w-4"><path d="M8 1v9c0 4-5 4-5 0M3 6h10M13 6c0 3-2 4-5 4" fill="none" stroke="#fff" strokeWidth="1.800" /></svg>
        </span>
      </div>
      <svg viewBox="0 0 24 24" className="ml-[12px] h-6 w-6 shrink-0"><rect x="1" y="1" width="22" height="22" rx="2" fill="#e8861c" /><path d="M5 5h12v15H5z" fill="#fbf2d8" /><path d="M7 9h8M7 12h8M7 15h6" stroke="#998" /><path d="M12 14L21 3" stroke="#f8d040" strokeWidth="2" /></svg>
      <svg viewBox="0 0 24 24" className="ml-[24px] h-6 w-6 shrink-0"><path d="M22 3C12 0 3 4 3 13c0 7 6 10 11 8 5-2 6-7 3-10-3-2-7 0-6 3 1-6 7-7 11-11z" fill="#1a9ae8" /></svg>
      <svg viewBox="0 0 24 24" className="ml-[24px] h-6 w-6 shrink-0"><circle cx="12" cy="12" r="10.500" fill="#7ac93a" stroke="#ddd" /><path d="M6 12h11c0-7-10-7-10 0s7 6 10 3" fill="none" stroke="#fff" strokeWidth="2" /></svg>
      <span className="ml-[25px] w-[27px] shrink-0 text-xs text-[#dcdcdc]">链接</span>
      <div className="ml-[16px] flex w-[48px] shrink-0 flex-col items-center text-xs leading-[19px] text-[#dcdcdc]">
        <span>54%</span>
        <span className="whitespace-nowrap">CPU使用</span>
      </div>
      <ChevronUp className="ml-[18px]" size={15} color="#eee" />
      <svg viewBox="0 0 18 14" className="ml-[8px] h-[14px] w-[18px] shrink-0"><path d="M2 4h13v8H2z" fill="#e8e8e8" /><path d="M15 6h2v4h-2z" fill="#e8e8e8" /><path d="M5 0v4M8 0v4" stroke="#fff" /></svg>
      <Wifi className="ml-[7px]" size={16} color="#ccc" />
      <Volume1 className="ml-[12px]" size={17} color="#eee" />
      <Keyboard className="ml-[7px]" size={22} color="#eee" strokeWidth={1.2} />
      <span className="ml-[7px] w-[15px] shrink-0 text-[14px] text-[#eee]">英</span>
      <span className="ml-[12px] flex h-[18px] w-[15px] -rotate-6 items-center justify-center rounded-[3px] bg-[#ef5a22] font-['Liberation_Sans'] text-[13px] font-bold leading-none text-white">S</span>
      <div className="ml-[15px] flex w-[62px] shrink-0 flex-col items-center font-['Liberation_Sans'] text-[13px] leading-[20px] text-[#e8e8e8]">
        <span>14:35</span>
        <span>2018/4/19</span>
      </div>
      <span className="relative ml-[17px] flex shrink-0">
        <svg viewBox="0 0 16 16" className="h-4 w-4"><path d="M0 1h16v11H7l-3 3v-3H0z" fill="#eee" /><path d="M3 4h10M3 7h10" stroke="#333" /></svg>
        <span className="absolute left-[7px] top-[8px] flex h-[17px] w-[17px] items-center justify-center rounded-full bg-[#4a4a4a] font-['Liberation_Sans'] text-[12px] font-bold text-white">1</span>
      </span>
      <span className="absolute right-[3px] top-0 h-full w-px bg-[#333]" />
      <span className="absolute bottom-0 left-[352px] h-[2px] w-[48px] bg-[#76b9ed]" />
      <span className="absolute bottom-0 left-[405px] h-[2px] w-[39px] bg-[#76b9ed]" />
      <span className="absolute bottom-0 left-[453px] h-[2px] w-[39px] bg-[#76b9ed]" />
      <span className="absolute bottom-0 left-[501px] h-[2px] w-[39px] bg-[#76b9ed]" />
    </div>
  </div>
)

export default function App() {
  return (
    <div className="relative flex h-[768px] w-[1366px] flex-col overflow-hidden bg-[#f0f0f0] font-['Noto_Sans_CJK_SC','Liberation_Sans',sans-serif] text-xs">
      <TitleBar />
      <MenuBar />
      <TopToolbar />
      <div className="mt-[4px] flex h-[624px] shrink-0">
        <LeftPanel />
        <div className="w-[5px] shrink-0" />
        <EditorArea />
      </div>
      <StatusBar />
      <Taskbar />
      <SogouBar />
      {/* floating speed ball, its top is cut by the screen edge */}
      <div className="absolute left-[1075px] top-0 flex h-[19px] w-[50px] items-end justify-center border-x-[3px] border-b-[3px] border-[#b4b4b4] bg-[#3fba55] pb-[3px] font-['Liberation_Sans'] text-[13px] font-bold leading-none text-white [border-radius:0_0_25px_25px/0_0_19px_19px]">68</div>
    </div>
  )
}
